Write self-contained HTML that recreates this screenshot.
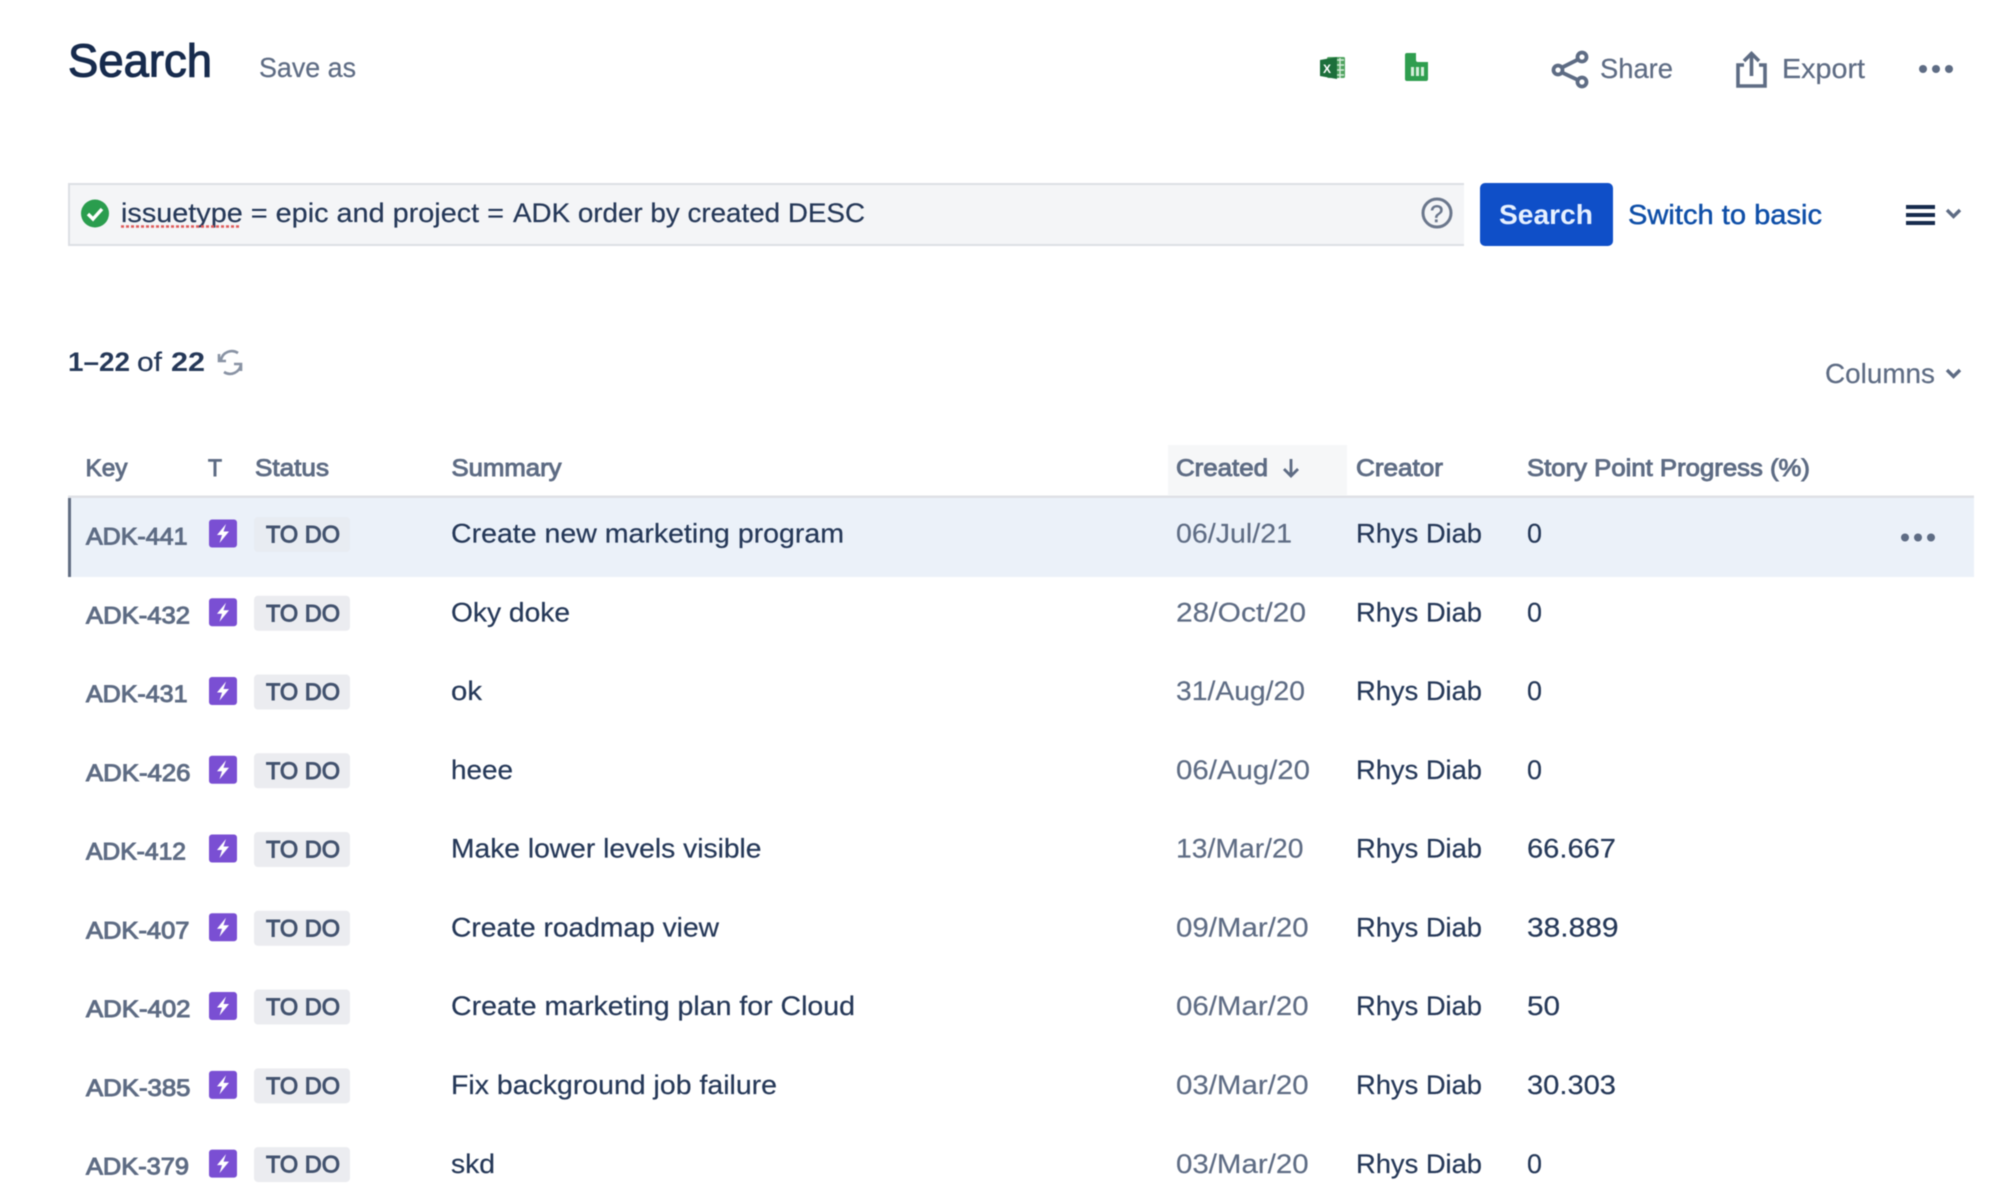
<!DOCTYPE html>
<html lang="en"><head><meta charset="utf-8"><title>Search</title>
<style>
html,body{margin:0;padding:0;background:#fff;width:2000px;height:1192px;overflow:hidden}
svg{display:block;filter:blur(.5px)}
text{font-family:"Liberation Sans",sans-serif;}
.t{font-size:27px;fill:#253858;stroke:#253858;stroke-width:.2px}
.k{font-size:24.500px;fill:#5e6c84;stroke:#5e6c84;stroke-width:1px}
.d{font-size:27px;fill:#5e6c84;stroke:#5e6c84;stroke-width:.15px}
.h{font-size:24px;fill:#5e6c84;stroke:#5e6c84;stroke-width:.9px}
.l{font-size:24.500px;fill:#42526e;stroke:#42526e;stroke-width:1px}
.g{font-size:27.500px;fill:#5e6c84;stroke:#5e6c84;stroke-width:.2px}
</style></head><body>
<svg width="2000" height="1192" viewBox="0 0 2000 1192" xmlns="http://www.w3.org/2000/svg">
<defs>
<g id="ep"><rect x="209" y="519.500" width="28" height="28" rx="3" fill="#7a4fd3"/><path d="M226 524l-9 11h5l-2.500 8 9.500-11.500h-5.500z" fill="#fff"/></g>
<g id="dots"><circle cx="0" cy="0" r="4"/><circle cx="13" cy="0" r="4"/><circle cx="26" cy="0" r="4"/></g>
</defs>
<rect width="2000" height="1192" fill="#fff"/>

<text x="68" y="76.500" font-size="46" fill="#172b4d" stroke="#172b4d" stroke-width="1.100" textLength="144" lengthAdjust="spacingAndGlyphs">Search</text>
<text x="259" y="77" class="g" textLength="97" lengthAdjust="spacingAndGlyphs">Save as</text>

<!-- excel -->
<rect x="1327" y="57" width="18" height="21" rx="1.5" fill="#4fa35f"/>
<path d="M1337 60h7M1337 65h7M1337 70h7M1337 75h7M1340 58v20" stroke="#d5ecd9" stroke-width="1.4" fill="none"/>
<path d="M1320 60l17-3v22l-17-3z" fill="#1d6f3b"/>
<text x="1323" y="73" font-size="12" font-weight="bold" fill="#fff">X</text>
<!-- sheets -->
<path d="M1407 53h9v7a2 2 0 0 0 2 2h10v17a2 2 0 0 1-2 2h-19a2 2 0 0 1-2-2V55a2 2 0 0 1 2-2z" fill="#2f9e4f"/>
<rect x="1411" y="67" width="13" height="9" fill="#d6eedb"/><path d="M1415 67v9M1420 67v9" stroke="#2f9e4f" stroke-width="2"/>

<!-- share -->
<g fill="none" stroke="#5e6c84" stroke-width="3.800"><circle cx="1582" cy="57" r="4.500"/><circle cx="1582" cy="82" r="4.500"/><circle cx="1558" cy="70" r="4.500"/><path d="M1562 67.500l16-8M1562 72.500l16 7.500"/></g>
<text x="1600" y="78" class="g" textLength="73" lengthAdjust="spacingAndGlyphs">Share</text>
<!-- export -->
<g fill="none" stroke="#5e6c84" stroke-width="3.600"><path d="M1744 65h-6v21h27V65h-6"/><path d="M1751.500 76V54M1744 61l7.500-7.500L1759 61"/></g>
<text x="1782" y="78" class="g" textLength="83" lengthAdjust="spacingAndGlyphs">Export</text>
<use href="#dots" x="1923" y="69" fill="#5e6c84"/>

<!-- JQL -->
<rect x="68" y="183" width="1396" height="63" fill="#f4f5f7"/>
<path d="M68 184h1396M68 245h1396M69 183v63" stroke="#dcdfe4" stroke-width="2" fill="none"/>
<circle cx="95" cy="213.500" r="14" fill="#2a9d4e"/>
<path d="M88 214l5 5 9-10" fill="none" stroke="#fff" stroke-width="3.400"/>
<text x="121" y="222" class="t" textLength="383" lengthAdjust="spacingAndGlyphs">issuetype = epic and project =</text>
<text x="513" y="222" class="t" textLength="352" lengthAdjust="spacingAndGlyphs">ADK order by created DESC</text>
<line x1="121" y1="226.500" x2="241" y2="226.500" stroke="#de5a5a" stroke-width="2.400" stroke-dasharray="3 2"/>
<circle cx="1437" cy="213" r="14" fill="none" stroke="#6b778c" stroke-width="3"/>
<text x="1430" y="222" font-size="24" fill="#6b778c" stroke="#6b778c" stroke-width=".5">?</text>
<rect x="1480" y="183" width="133" height="63" rx="5" fill="#0f4fc8"/>
<text x="1499" y="224" font-size="28" font-weight="bold" fill="#e6f0ff" textLength="94" lengthAdjust="spacingAndGlyphs">Search</text>
<text x="1628" y="224" font-size="27.500" fill="#0f4fa8" stroke="#0f4fa8" stroke-width=".45" textLength="194" lengthAdjust="spacingAndGlyphs">Switch to basic</text>
<path d="M1906 207h29M1906 215h29M1906 223h29" stroke="#172b4d" stroke-width="4"/>
<path d="M1947 210l6.500 6.500 6.500-6.500" fill="none" stroke="#5e6c84" stroke-width="3.400"/>

<!-- count -->
<text x="68" y="371" font-size="26.500" font-weight="bold" fill="#253858" textLength="62" lengthAdjust="spacingAndGlyphs">1–22</text>
<text x="137" y="371" class="t" textLength="25" lengthAdjust="spacingAndGlyphs">of</text>
<text x="171" y="371" font-size="26.500" font-weight="bold" fill="#253858" textLength="34" lengthAdjust="spacingAndGlyphs">22</text>
<g fill="none" stroke="#8993a4" stroke-width="2.600"><path d="M221 360a11 11 0 0 1 17-7M219 354v7h7M241 364a11 11 0 0 1-17 8M241 371v-7h-7"/></g>
<text x="1825" y="383" class="g" textLength="110" lengthAdjust="spacingAndGlyphs">Columns</text>
<path d="M1947 370l6.500 6.500 6.500-6.500" fill="none" stroke="#5e6c84" stroke-width="3.400"/>

<!-- header -->
<rect x="1168" y="445" width="179" height="50" fill="#f6f7f8"/>
<text x="85.500" y="476" class="h" textLength="42" lengthAdjust="spacingAndGlyphs">Key</text>
<text x="208" y="476" class="h" textLength="14" lengthAdjust="spacingAndGlyphs">T</text>
<text x="255" y="476" class="h" textLength="74" lengthAdjust="spacingAndGlyphs">Status</text>
<text x="451.500" y="476" class="h" textLength="110" lengthAdjust="spacingAndGlyphs">Summary</text>
<text x="1176" y="476" class="h" textLength="92" lengthAdjust="spacingAndGlyphs">Created</text>
<path d="M1291 459v17M1284 469l7 7 7-7" fill="none" stroke="#5e6c84" stroke-width="2.800"/>
<text x="1356" y="476" class="h" textLength="87" lengthAdjust="spacingAndGlyphs">Creator</text>
<text x="1527" y="476" class="h" textLength="283" lengthAdjust="spacingAndGlyphs">Story Point Progress (%)</text>
<rect x="68" y="495.500" width="1906" height="2.500" fill="#dfe1e6"/>

<!-- selected row -->
<rect x="68" y="498" width="1906" height="79" fill="#ebf1f9"/>
<rect x="68" y="498" width="3" height="79" fill="#616d82"/>
<use href="#dots" x="1905" y="537.500" fill="#5e6c84"/>

<!-- rows -->
<g>
<use href="#ep"/><rect x="254" y="517" width="96" height="35" rx="4" fill="#e8ecf2"/>
<text x="86" y="544.500" class="k" textLength="101.500" lengthAdjust="spacingAndGlyphs">ADK-441</text>
<text x="266" y="542.500" class="l" textLength="74" lengthAdjust="spacingAndGlyphs">TO DO</text>
<text x="451" y="542.700" class="t" textLength="393" lengthAdjust="spacingAndGlyphs">Create new marketing program</text>
<text x="1176" y="542.700" class="d" textLength="116" lengthAdjust="spacingAndGlyphs">06/Jul/21</text>
<text x="1356" y="542.700" class="t" textLength="126" lengthAdjust="spacingAndGlyphs">Rhys Diab</text>
<text x="1527" y="542.700" class="t" textLength="15" lengthAdjust="spacingAndGlyphs">0</text>
</g>
<g transform="translate(0,78.760)">
<use href="#ep"/><rect x="254" y="517" width="96" height="35" rx="4" fill="#ebecf0"/>
<text x="86" y="544.500" class="k" textLength="104" lengthAdjust="spacingAndGlyphs">ADK-432</text>
<text x="266" y="542.500" class="l" textLength="74" lengthAdjust="spacingAndGlyphs">TO DO</text>
<text x="451" y="542.700" class="t" textLength="119" lengthAdjust="spacingAndGlyphs">Oky doke</text>
<text x="1176" y="542.700" class="d" textLength="130" lengthAdjust="spacingAndGlyphs">28/Oct/20</text>
<text x="1356" y="542.700" class="t" textLength="126" lengthAdjust="spacingAndGlyphs">Rhys Diab</text>
<text x="1527" y="542.700" class="t" textLength="15" lengthAdjust="spacingAndGlyphs">0</text>
</g>
<g transform="translate(0,157.520)">
<use href="#ep"/><rect x="254" y="517" width="96" height="35" rx="4" fill="#ebecf0"/>
<text x="86" y="544.500" class="k" textLength="101.500" lengthAdjust="spacingAndGlyphs">ADK-431</text>
<text x="266" y="542.500" class="l" textLength="74" lengthAdjust="spacingAndGlyphs">TO DO</text>
<text x="451" y="542.700" class="t" textLength="31" lengthAdjust="spacingAndGlyphs">ok</text>
<text x="1176" y="542.700" class="d" textLength="129" lengthAdjust="spacingAndGlyphs">31/Aug/20</text>
<text x="1356" y="542.700" class="t" textLength="126" lengthAdjust="spacingAndGlyphs">Rhys Diab</text>
<text x="1527" y="542.700" class="t" textLength="15" lengthAdjust="spacingAndGlyphs">0</text>
</g>
<g transform="translate(0,236.280)">
<use href="#ep"/><rect x="254" y="517" width="96" height="35" rx="4" fill="#ebecf0"/>
<text x="86" y="544.500" class="k" textLength="104.500" lengthAdjust="spacingAndGlyphs">ADK-426</text>
<text x="266" y="542.500" class="l" textLength="74" lengthAdjust="spacingAndGlyphs">TO DO</text>
<text x="451" y="542.700" class="t" textLength="62" lengthAdjust="spacingAndGlyphs">heee</text>
<text x="1176" y="542.700" class="d" textLength="134" lengthAdjust="spacingAndGlyphs">06/Aug/20</text>
<text x="1356" y="542.700" class="t" textLength="126" lengthAdjust="spacingAndGlyphs">Rhys Diab</text>
<text x="1527" y="542.700" class="t" textLength="15" lengthAdjust="spacingAndGlyphs">0</text>
</g>
<g transform="translate(0,315.040)">
<use href="#ep"/><rect x="254" y="517" width="96" height="35" rx="4" fill="#ebecf0"/>
<text x="86" y="544.500" class="k" textLength="100" lengthAdjust="spacingAndGlyphs">ADK-412</text>
<text x="266" y="542.500" class="l" textLength="74" lengthAdjust="spacingAndGlyphs">TO DO</text>
<text x="451" y="542.700" class="t" textLength="310.500" lengthAdjust="spacingAndGlyphs">Make lower levels visible</text>
<text x="1176" y="542.700" class="d" textLength="127.500" lengthAdjust="spacingAndGlyphs">13/Mar/20</text>
<text x="1356" y="542.700" class="t" textLength="126" lengthAdjust="spacingAndGlyphs">Rhys Diab</text>
<text x="1527" y="542.700" class="t" textLength="89" lengthAdjust="spacingAndGlyphs">66.667</text>
</g>
<g transform="translate(0,393.800)">
<use href="#ep"/><rect x="254" y="517" width="96" height="35" rx="4" fill="#ebecf0"/>
<text x="86" y="544.500" class="k" textLength="103.500" lengthAdjust="spacingAndGlyphs">ADK-407</text>
<text x="266" y="542.500" class="l" textLength="74" lengthAdjust="spacingAndGlyphs">TO DO</text>
<text x="451" y="542.700" class="t" textLength="268" lengthAdjust="spacingAndGlyphs">Create roadmap view</text>
<text x="1176" y="542.700" class="d" textLength="132.600" lengthAdjust="spacingAndGlyphs">09/Mar/20</text>
<text x="1356" y="542.700" class="t" textLength="126" lengthAdjust="spacingAndGlyphs">Rhys Diab</text>
<text x="1527" y="542.700" class="t" textLength="91.600" lengthAdjust="spacingAndGlyphs">38.889</text>
</g>
<g transform="translate(0,472.560)">
<use href="#ep"/><rect x="254" y="517" width="96" height="35" rx="4" fill="#ebecf0"/>
<text x="86" y="544.500" class="k" textLength="104.500" lengthAdjust="spacingAndGlyphs">ADK-402</text>
<text x="266" y="542.500" class="l" textLength="74" lengthAdjust="spacingAndGlyphs">TO DO</text>
<text x="451" y="542.700" class="t" textLength="404" lengthAdjust="spacingAndGlyphs">Create marketing plan for Cloud</text>
<text x="1176" y="542.700" class="d" textLength="132.600" lengthAdjust="spacingAndGlyphs">06/Mar/20</text>
<text x="1356" y="542.700" class="t" textLength="126" lengthAdjust="spacingAndGlyphs">Rhys Diab</text>
<text x="1527" y="542.700" class="t" textLength="33" lengthAdjust="spacingAndGlyphs">50</text>
</g>
<g transform="translate(0,551.320)">
<use href="#ep"/><rect x="254" y="517" width="96" height="35" rx="4" fill="#ebecf0"/>
<text x="86" y="544.500" class="k" textLength="104.500" lengthAdjust="spacingAndGlyphs">ADK-385</text>
<text x="266" y="542.500" class="l" textLength="74" lengthAdjust="spacingAndGlyphs">TO DO</text>
<text x="451" y="542.700" class="t" textLength="326" lengthAdjust="spacingAndGlyphs">Fix background job failure</text>
<text x="1176" y="542.700" class="d" textLength="132.600" lengthAdjust="spacingAndGlyphs">03/Mar/20</text>
<text x="1356" y="542.700" class="t" textLength="126" lengthAdjust="spacingAndGlyphs">Rhys Diab</text>
<text x="1527" y="542.700" class="t" textLength="89" lengthAdjust="spacingAndGlyphs">30.303</text>
</g>
<g transform="translate(0,630.080)">
<use href="#ep"/><rect x="254" y="517" width="96" height="35" rx="4" fill="#ebecf0"/>
<text x="86" y="544.500" class="k" textLength="103" lengthAdjust="spacingAndGlyphs">ADK-379</text>
<text x="266" y="542.500" class="l" textLength="74" lengthAdjust="spacingAndGlyphs">TO DO</text>
<text x="451" y="542.700" class="t" textLength="44" lengthAdjust="spacingAndGlyphs">skd</text>
<text x="1176" y="542.700" class="d" textLength="132.600" lengthAdjust="spacingAndGlyphs">03/Mar/20</text>
<text x="1356" y="542.700" class="t" textLength="126" lengthAdjust="spacingAndGlyphs">Rhys Diab</text>
<text x="1527" y="542.700" class="t" textLength="15" lengthAdjust="spacingAndGlyphs">0</text>
</g>
</svg>
</body></html>
